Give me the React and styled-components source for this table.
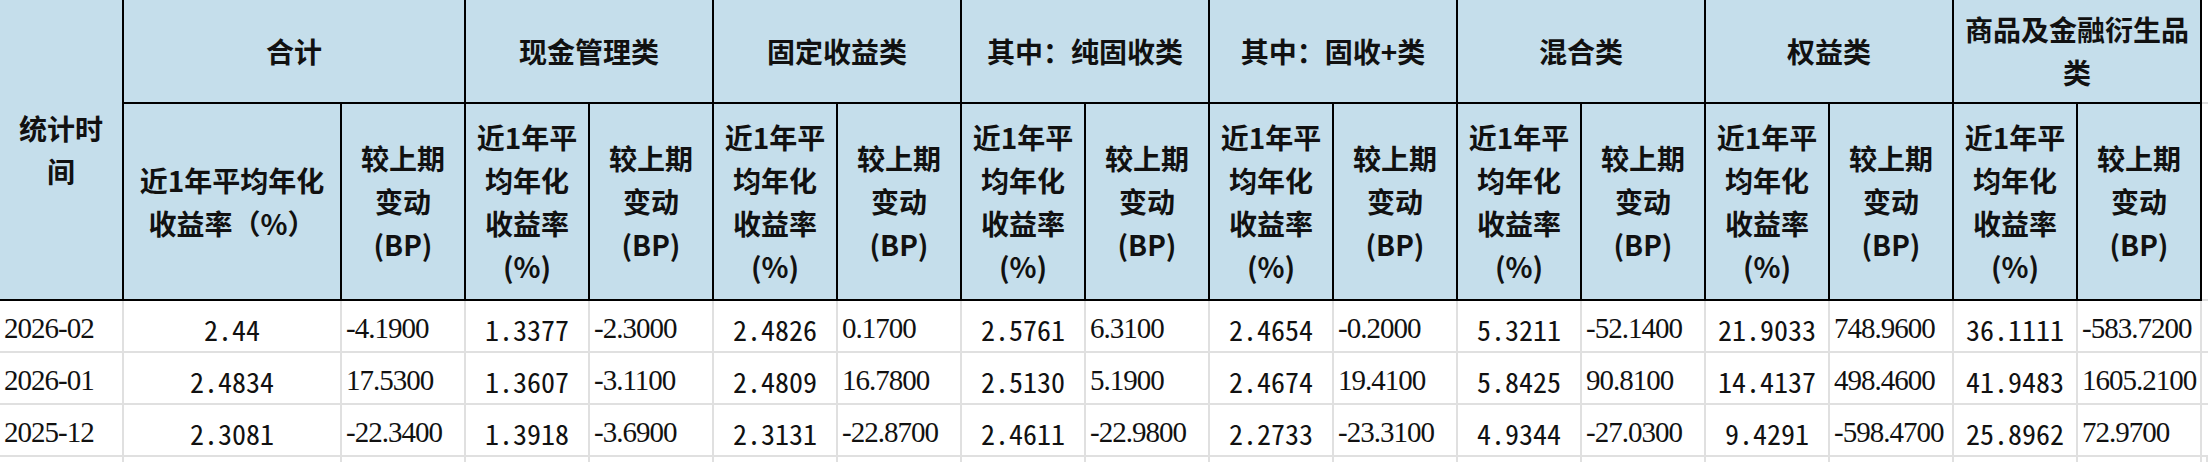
import React from 'react';
import styled, { createGlobalStyle, css } from 'styled-components';

const categories = [
  ['合计'],
  ['现金管理类'],
  ['固定收益类'],
  ['其中：纯固收类'],
  ['其中：固收+类'],
  ['混合类'],
  ['权益类'],
  ['商品及金融衍生品', '类'],
];

const rows = [
  ['2026-02', [['2.44', '-4.1900'], ['1.3377', '-2.3000'], ['2.4826', '0.1700'], ['2.5761', '6.3100'], ['2.4654', '-0.2000'], ['5.3211', '-52.1400'], ['21.9033', '748.9600'], ['36.1111', '-583.7200']]],
  ['2026-01', [['2.4834', '17.5300'], ['1.3607', '-3.1100'], ['2.4809', '16.7800'], ['2.5130', '5.1900'], ['2.4674', '19.4100'], ['5.8425', '90.8100'], ['14.4137', '498.4600'], ['41.9483', '1605.2100']]],
  ['2025-12', [['2.3081', '-22.3400'], ['1.3918', '-3.6900'], ['2.3131', '-22.8700'], ['2.4611', '-22.9800'], ['2.2733', '-23.3100'], ['4.9344', '-27.0300'], ['9.4291', '-598.4700'], ['25.8962', '72.9700']]],
];

const Lines = ({ lines }) =>
  lines.map((line, i) => (
    <React.Fragment key={i}>
      {i > 0 && <br />}
      {line}
    </React.Fragment>
  ));

const App = () => {
  return (
    <>
      <GlobalStyle />
      <Sheet>
        <HeadCell $rows={2}>
          <Lines lines={['统计时', '间']} />
        </HeadCell>
        {categories.map((label, i) => (
          <HeadCell key={i} $cols={2}>
            <Lines lines={label} />
          </HeadCell>
        ))}
        <Blank />

        {categories.map((_, i) =>
          i === 0 ? (
            <React.Fragment key={i}>
              <HeadCell>
                <Lines lines={['近1年平均年化', '收益率（%）']} />
              </HeadCell>
              <HeadCell>
                <Lines lines={['较上期', '变动', '(BP)']} />
              </HeadCell>
            </React.Fragment>
          ) : (
            <React.Fragment key={i}>
              <HeadCell>
                <Lines lines={['近1年平', '均年化', '收益率', '(%)']} />
              </HeadCell>
              <HeadCell>
                <Lines lines={['较上期', '变动', '(BP)']} />
              </HeadCell>
            </React.Fragment>
          )
        )}
        <Blank />

        {rows.map(([date, pairs]) => (
          <React.Fragment key={date}>
            <DataCell $kind="date">{date}</DataCell>
            {pairs.map(([rate, bp], j) => (
              <React.Fragment key={j}>
                <DataCell $kind="rate">{rate}</DataCell>
                <DataCell $kind="bp">{bp}</DataCell>
              </React.Fragment>
            ))}
            <Blank />
          </React.Fragment>
        ))}

        {Array.from({ length: 18 }).map((_, i) => (
          <DataCell key={i} />
        ))}
      </Sheet>
    </>
  );
};

export default App;

const GlobalStyle = createGlobalStyle`
  html, body {
    margin: 0;
    padding: 0;
    background: #ffffff;
    overflow: hidden;
  }
`;

const Sheet = styled.div`
  display: grid;
  grid-template-columns: 124px 218px repeat(15, 124px) 1fr;
  grid-template-rows: 104px 197px repeat(4, 52px);
  width: 2208px;
  height: 462px;
  overflow: hidden;
  color: #111;
`;

const HeadCell = styled.div`
  box-sizing: border-box;
  grid-column: span ${(p) => p.$cols || 1};
  grid-row: span ${(p) => p.$rows || 1};
  display: flex;
  align-items: center;
  justify-content: center;
  text-align: center;
  white-space: nowrap;
  background: #c5deeb;
  border-right: 2px solid #000;
  border-bottom: 2px solid #000;
  font-family: 'Noto Sans CJK SC', 'Noto Sans', sans-serif;
  font-weight: 700;
  font-size: 28px;
  line-height: 43px;
`;

const Blank = styled.div`
  box-sizing: border-box;
  background: #ffffff;
  border-bottom: 2px solid #e0e0e0;
`;

const serif = css`
  font-family: 'Liberation Serif', 'Times New Roman', serif;
  font-size: 29px;
  letter-spacing: -1px;
  justify-content: flex-start;
`;

const DataCell = styled.div`
  box-sizing: border-box;
  display: flex;
  align-items: center;
  padding-top: 5px;
  white-space: nowrap;
  background: #ffffff;
  border-right: 2px solid #e0e0e0;
  border-bottom: 2px solid #e0e0e0;

  ${(p) => p.$kind === 'date' && css`
    ${serif}
    padding-left: 4px;
  `}

  ${(p) => p.$kind === 'bp' && css`
    ${serif}
    padding-left: 4px;
  `}

  ${(p) => p.$kind === 'rate' && css`
    justify-content: center;
    font-family: 'Noto Sans Mono CJK SC', 'Noto Sans CJK SC', monospace;
    font-feature-settings: 'hwid' 1;
    font-size: 28px;
    font-weight: 400;
  `}
`;
